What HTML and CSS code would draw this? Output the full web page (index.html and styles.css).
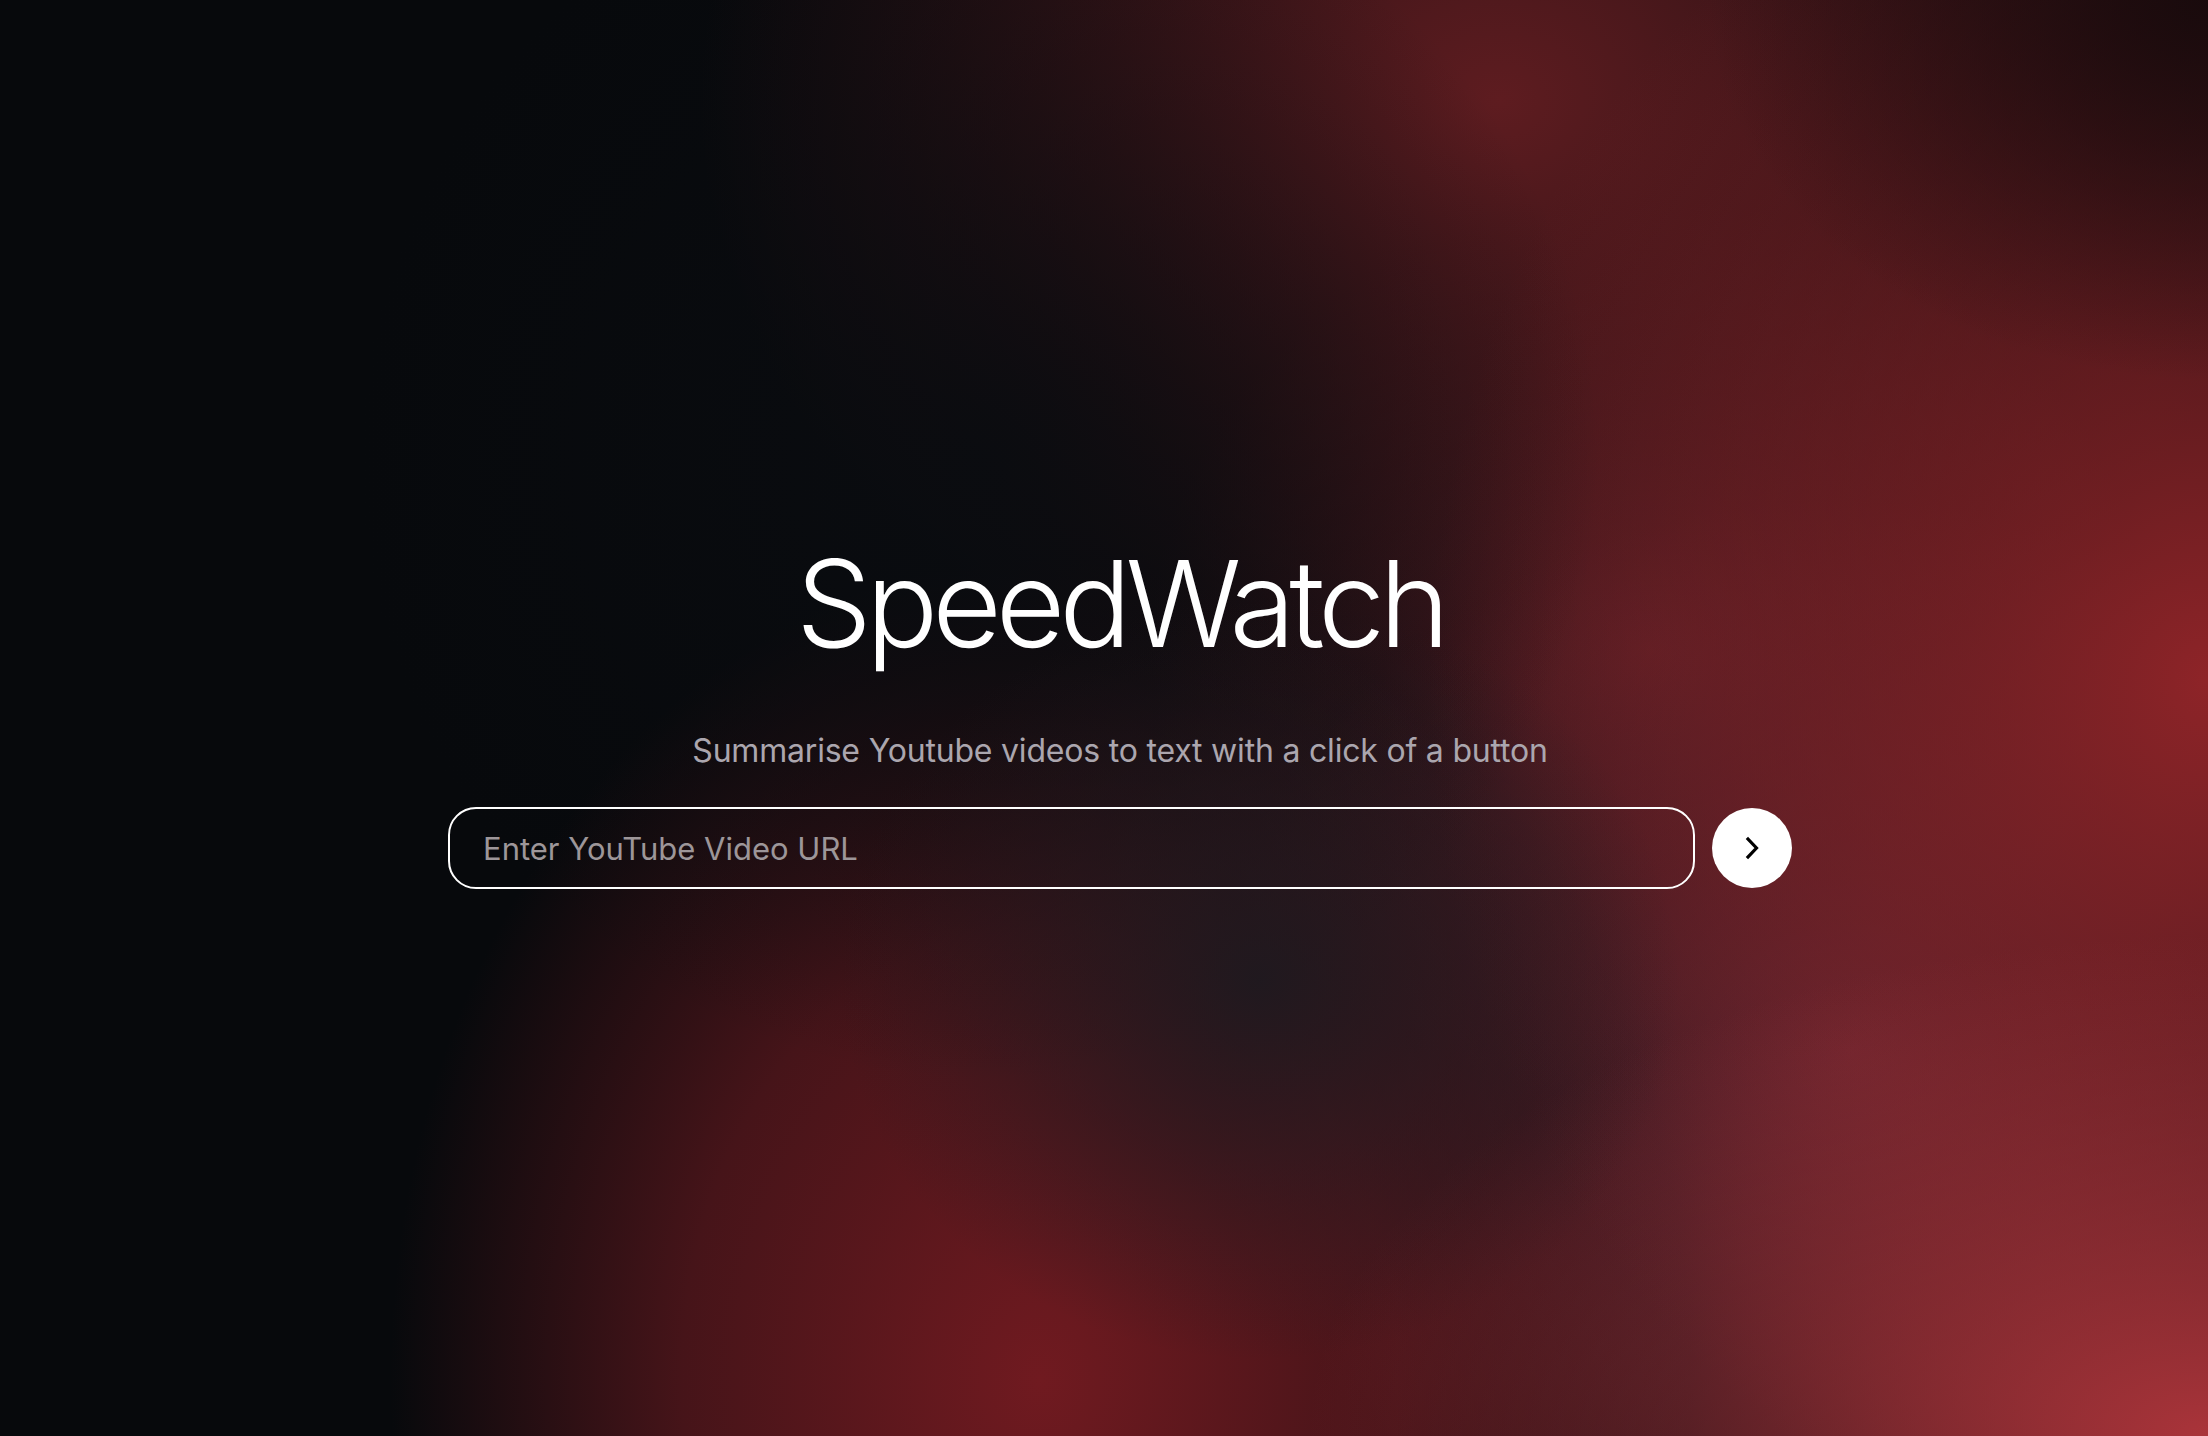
FILE: index.html
```html
<!DOCTYPE html>
<html lang="en">
<head>
<meta charset="utf-8">
<title>SpeedWatch</title>
<link rel="stylesheet" href="styles.css">
</head>
<body>
<main class="page">
  <section class="hero">
    <h1 class="title">SpeedWatch</h1>
    <p class="subtitle">Summarise Youtube videos to text with a click of a button</p>
    <form class="search">
      <input class="url-input" type="text" placeholder="Enter YouTube Video URL">
      <button class="go" type="button" aria-label="Submit">
        <svg width="24" height="24" viewBox="0 0 24 24" fill="none" stroke="#000" stroke-width="3.2" stroke-linecap="square" stroke-linejoin="miter"><path d="M8 3 L16.5 12 L8 21"/></svg>
      </button>
    </form>
  </section>
</main>
</body>
</html>
```

FILE: styles.css
```css
html, body {
  margin: 0;
  padding: 0;
  height: 100%;
}
body {
  font-family: Inter, "Noto Sans", sans-serif;
  color: #fff;
  background-color: #07090c;
  background-image:
    radial-gradient(ellipse 500px 380px at 2208px 0px, rgba(24,10,12,0.95) 0%, rgba(24,10,12,0) 100%),
    radial-gradient(ellipse 420px 380px at 1260px 980px, rgba(30,25,31,0.95) 0%, rgba(30,25,31,0) 100%),
    radial-gradient(ellipse 620px 620px at 980px 460px, rgba(10,12,16,0.95) 0%, rgba(10,12,16,0) 100%),
    radial-gradient(ellipse 900px 500px at 2208px 1436px, rgba(170,52,58,1) 0%, rgba(170,52,58,0) 100%),
    radial-gradient(ellipse 780px 900px at 2208px 680px, rgba(142,36,40,1) 0%, rgba(142,36,40,0.6) 40%, rgba(142,36,40,0) 100%),
    radial-gradient(ellipse 650px 820px at 1040px 1380px, rgba(112,26,32,1) 0%, rgba(104,26,32,0.65) 55%, rgba(104,26,32,0) 100%),
    radial-gradient(ellipse 800px 650px at 1500px 100px, rgba(94,28,32,1) 0%, rgba(94,28,32,0) 100%),
    radial-gradient(ellipse 500px 450px at 1650px 650px, rgba(96,32,40,0.8) 0%, rgba(96,32,40,0) 100%),
    radial-gradient(ellipse 650px 550px at 1850px 1050px, rgba(88,36,48,1) 0%, rgba(88,36,48,0) 100%);
  background-repeat: no-repeat;
}
.page {
  min-height: 100vh;
  box-sizing: border-box;
  display: flex;
  justify-content: center;
  padding-left: 32px;
}
.hero {
  display: flex;
  flex-direction: column;
  align-items: center;
  padding-top: 534px;
}
.title {
  margin: 0;
  font-weight: 300;
  font-size: 120px;
  line-height: 140px;
  letter-spacing: -6px;
  color: #fff;
}
.subtitle {
  margin: 57px 0 0;
  font-size: 32px;
  line-height: 40px;
  color: #aba6ae;
  font-weight: 400;
  letter-spacing: -0.2px;
}
.search {
  margin-top: 36px;
  display: flex;
  align-items: center;
  gap: 17px;
}
.url-input {
  box-sizing: border-box;
  width: 1247px;
  height: 82px;
  border: 2px solid #fff;
  border-radius: 28px;
  background: transparent;
  padding: 0 33px;
  font-family: Inter, "Noto Sans", sans-serif;
  font-size: 31px;
  color: #fff;
  outline: none;
}
.url-input::placeholder {
  color: #9d9699;
}
.go {
  width: 80px;
  height: 80px;
  border-radius: 50%;
  border: none;
  background: #fff;
  display: flex;
  align-items: center;
  justify-content: center;
  padding: 0;
  cursor: pointer;
}
```
